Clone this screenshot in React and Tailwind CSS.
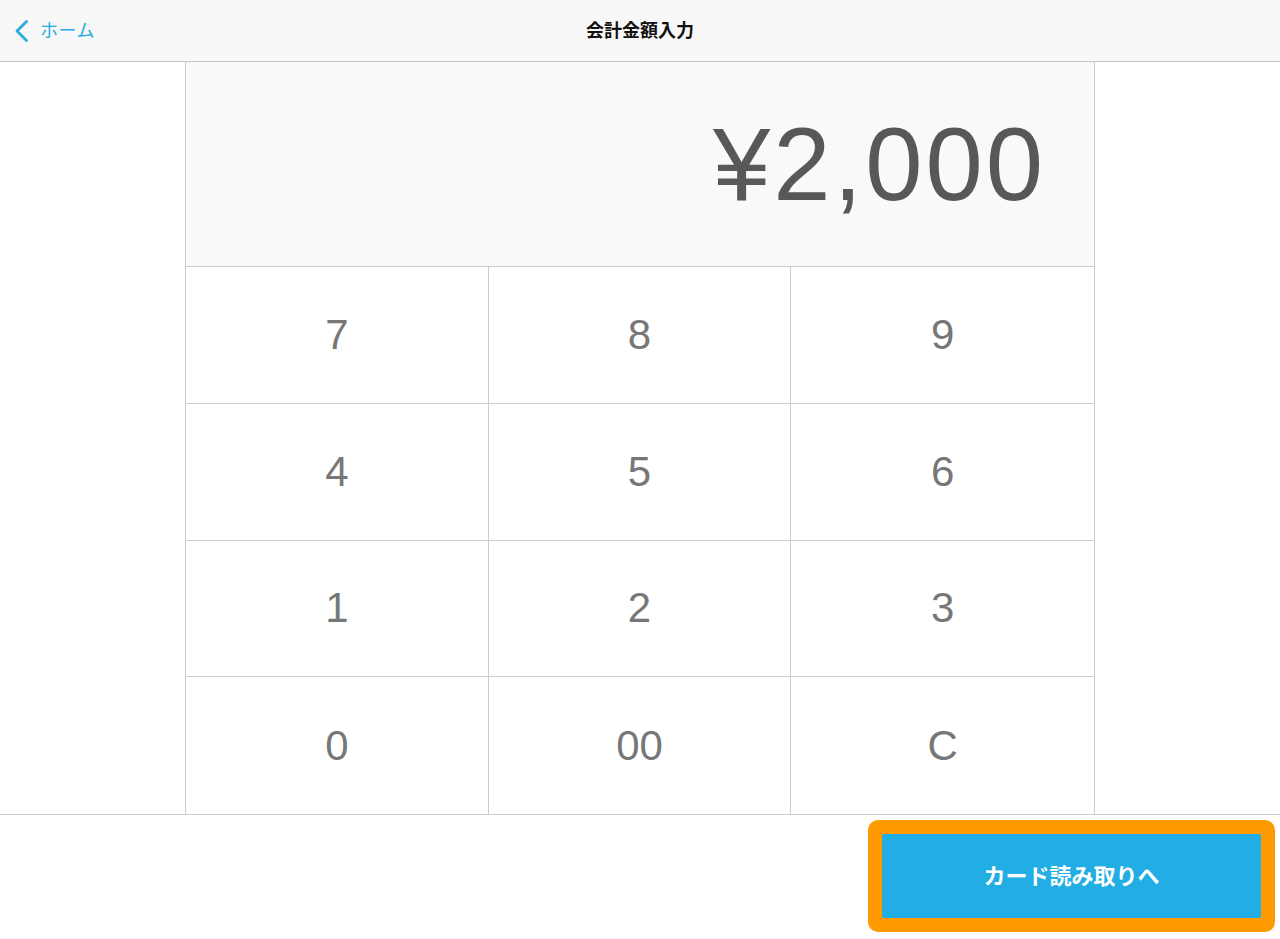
import React from "react";

const keys = ["7", "8", "9", "4", "5", "6", "1", "2", "3", "0", "00", "C"];

export default function App() {
  return (
    <div
      className="w-[1280px] h-[939px] bg-white flex flex-col overflow-hidden"
      style={{ fontFamily: '"Liberation Sans", "Noto Sans CJK JP", sans-serif' }}
    >
      <header className="relative h-[62px] shrink-0 bg-[#f8f8f8] border-b border-[#c8c8c8] flex items-center justify-center">
        <div className="absolute left-[14px] top-0 h-full flex items-center gap-[11px] text-[#29abe2]">
          <svg width="15" height="24" viewBox="0 0 15 24" fill="none">
            <path d="M12.5 2.5 L3 12 L12.5 21.5" stroke="#29abe2" strokeWidth="2.8" strokeLinecap="round" strokeLinejoin="round" />
          </svg>
          <span className="text-[18px] leading-none tracking-[0.5px]">ホーム</span>
        </div>
        <h1 className="text-[18px] font-bold text-[#111] leading-none">会計金額入力</h1>
      </header>

      <main className="h-[752px] shrink-0 flex justify-center">
        <div className="w-[910px] border-x border-[#cccccc] flex flex-col">
          <div className="h-[205px] bg-[#f9f9f9] border-b border-[#cccccc] flex items-center justify-end pr-[48px]">
            <span
              className="text-[103px] leading-none text-[#585858] tracking-[3px]"
              style={{ fontFamily: '"Liberation Sans", Arial, sans-serif' }}
            >
              ¥2,000
            </span>
          </div>
          <div className="grid grid-cols-3 grid-rows-4 flex-1">
            {keys.map((k, i) => (
              <div
                key={k}
                className={`flex items-center justify-center text-[42px] text-[#777777] leading-none ${
                  i % 3 !== 2 ? "border-r border-[#cccccc]" : ""
                } ${i < 9 ? "border-b border-[#cccccc]" : ""}`}
              >
                {k}
              </div>
            ))}
          </div>
        </div>
      </main>

      <footer className="flex-1 border-t border-[#cccccc] flex justify-end items-start pt-[5px] pr-[5px]">
        <div className="p-[14px] rounded-[10px] bg-[#ff9a00]">
          <button className="w-[379px] h-[84px] rounded-[2px] bg-[#22aee4] text-white text-[22px] font-bold flex items-center justify-center">
            カード読み取りへ
          </button>
        </div>
      </footer>
    </div>
  );
}
